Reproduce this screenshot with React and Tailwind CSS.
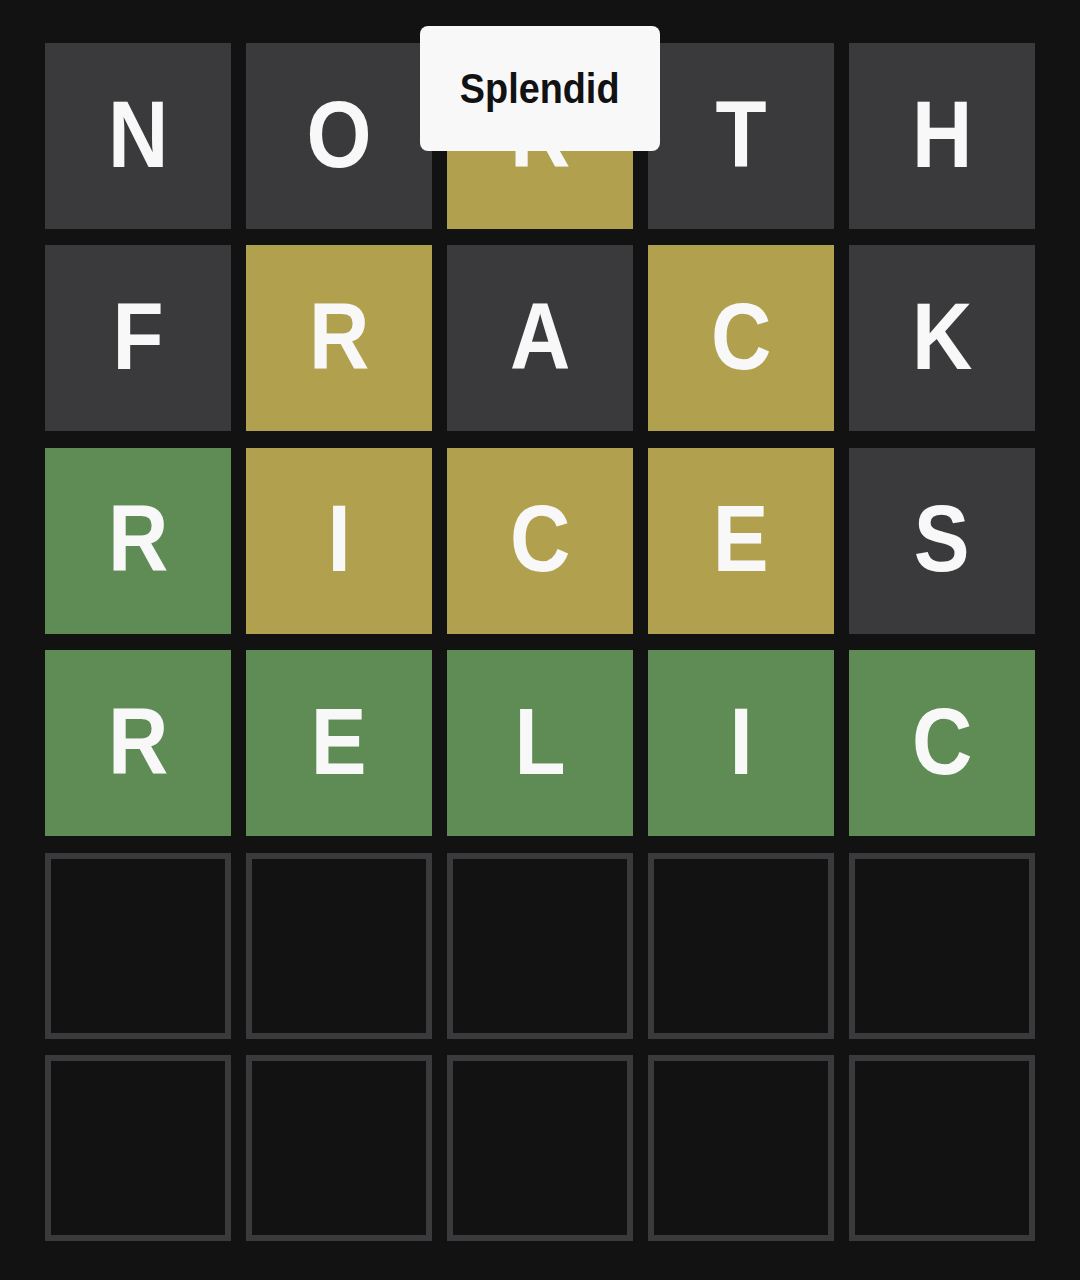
const rows = [
  [['N', 'dark'], ['O', 'dark'], ['R', 'present'], ['T', 'dark'], ['H', 'dark']],
  [['F', 'dark'], ['R', 'present'], ['A', 'dark'], ['C', 'present'], ['K', 'dark']],
  [['R', 'correct'], ['I', 'present'], ['C', 'present'], ['E', 'present'], ['S', 'dark']],
  [['R', 'correct'], ['E', 'correct'], ['L', 'correct'], ['I', 'correct'], ['C', 'correct']],
  [['', 'empty'], ['', 'empty'], ['', 'empty'], ['', 'empty'], ['', 'empty']],
  [['', 'empty'], ['', 'empty'], ['', 'empty'], ['', 'empty'], ['', 'empty']],
];

const tileStyles = {
  dark: 'bg-[#3a3a3c]',
  present: 'bg-[#b1a14f]',
  correct: 'bg-[#5f8b55]',
  empty: 'border-[6px] border-[#3a3a3c]',
};

const Tile = ({ letter, state }) => (
  <div className={`flex items-center justify-center pb-1 ${tileStyles[state]}`}>
    <span className="inline-block scale-x-[0.88] text-[95px] font-bold leading-none text-[#f8f8f8]">{letter}</span>
  </div>
);

const App = () => {
  return (
    <div
      className="relative min-h-[1280px] w-full bg-[#121213] pt-[43px]"
      style={{ fontFamily: '"Liberation Sans", Arial, sans-serif' }}
    >
      <div className="mx-auto grid h-[1198px] w-[990px] grid-cols-5 grid-rows-6 gap-x-[15px] gap-y-[16.4px]">
        {rows.map((row, r) =>
          row.map(([letter, state], c) => <Tile key={`${r}-${c}`} letter={letter} state={state} />)
        )}
      </div>

      {/* toast */}
      <div className="absolute left-[420px] top-[26px] flex h-[125px] w-[240px] items-center justify-center rounded-[8px] bg-[#f8f8f8]">
        <span className="inline-block scale-x-90 text-[42px] font-bold text-[#121213]">Splendid</span>
      </div>
    </div>
  );
};

export default App;
